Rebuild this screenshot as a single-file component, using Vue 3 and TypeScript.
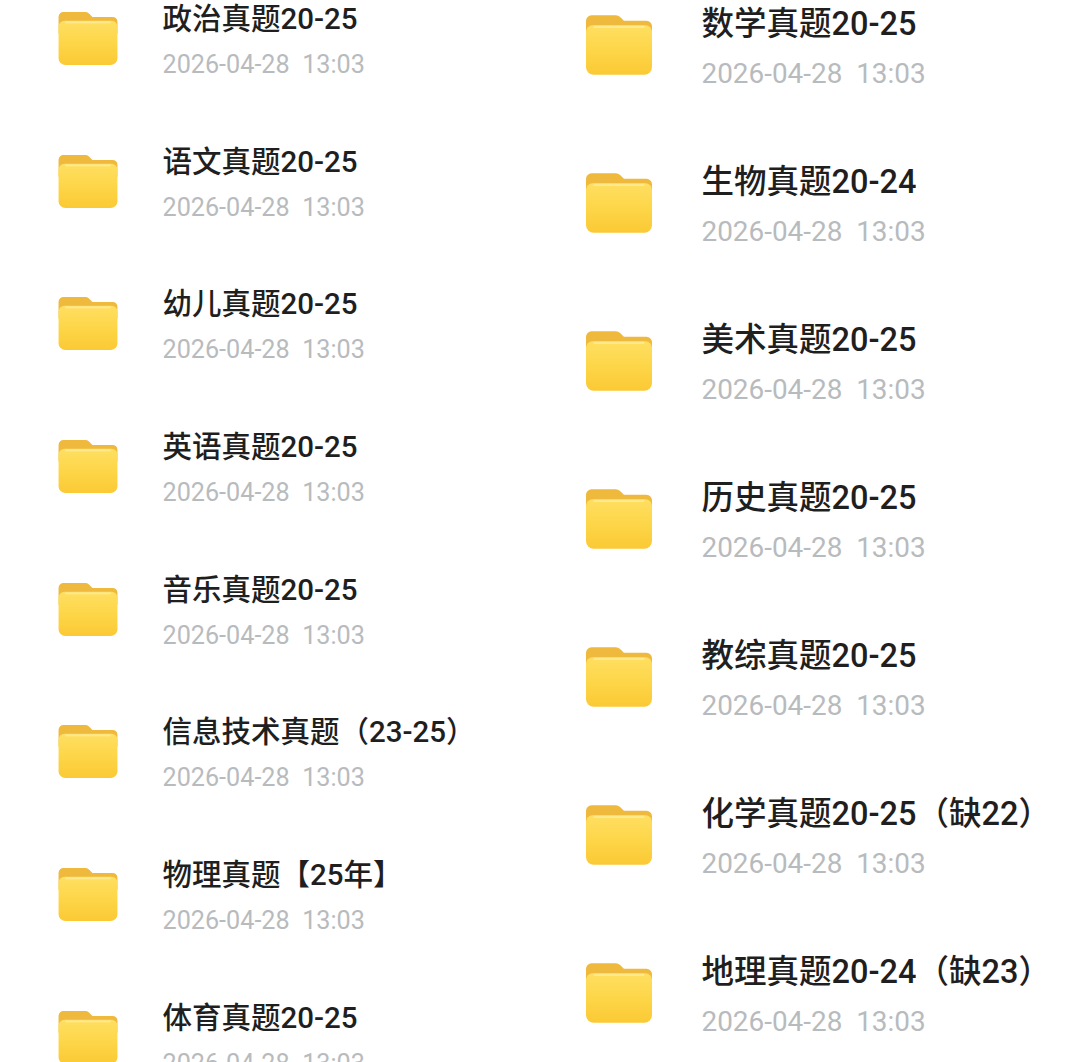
<script setup lang="ts">
interface Folder {
  name: string
}

const stamp = '2026-04-28  13:03'

const leftFolders: Folder[] = [
  { name: '政治真题20-25' },
  { name: '语文真题20-25' },
  { name: '幼儿真题20-25' },
  { name: '英语真题20-25' },
  { name: '音乐真题20-25' },
  { name: '信息技术真题（23-25）' },
  { name: '物理真题【25年】' },
  { name: '体育真题20-25' },
]

const rightFolders: Folder[] = [
  { name: '数学真题20-25' },
  { name: '生物真题20-24' },
  { name: '美术真题20-25' },
  { name: '历史真题20-25' },
  { name: '教综真题20-25' },
  { name: '化学真题20-25（缺22）' },
  { name: '地理真题20-24（缺23）' },
]

const columns = [
  { key: 'left', folders: leftFolders },
  { key: 'right', folders: rightFolders },
]
</script>

<template>
  <div class="page">
    <div v-for="col in columns" :key="col.key" class="list" :class="col.key">
      <div v-for="folder in col.folders" :key="folder.name" class="row">
        <svg class="icon" viewBox="0 0 60 54">
          <defs>
            <linearGradient :id="'front-' + col.key" x1="0" y1="0" x2="0" y2="1">
              <stop offset="0" stop-color="#ffdf62" />
              <stop offset="0.5" stop-color="#fdd648" />
              <stop offset="1" stop-color="#fbc935" />
            </linearGradient>
          </defs>
          <path d="M0 5a5 5 0 0 1 5-5h22a6 6 0 0 1 4 1.500l3.500 3.500H55a5 5 0 0 1 5 5v12H0z" fill="#eeb93c" />
          <path d="M0 15a6 6 0 0 1 6-6h48a6 6 0 0 1 6 6v32a7 7 0 0 1-7 7H7a7 7 0 0 1-7-7z" :fill="'url(#front-' + col.key + ')'" />
          <path d="M7 10.500h46" stroke="#ffe98e" stroke-width="2" fill="none" />
        </svg>
        <div class="text">
          <div class="title">{{ folder.name }}</div>
          <div class="date">{{ stamp }}</div>
        </div>
      </div>
    </div>
  </div>
</template>

<style scoped>
.page {
  display: flex;
  height: 1062px;
  overflow: hidden;
  background: #fff;
  font-family: Roboto, "Noto Sans CJK SC", sans-serif;
}

.list {
  display: flex;
  flex-direction: column;
}

.row {
  display: flex;
  flex-shrink: 0;
  align-items: flex-start;
}

.icon {
  display: block;
  flex-shrink: 0;
  filter: blur(0.6px);
}

.title {
  color: #1f1f1f;
  font-weight: 500;
  white-space: nowrap;
}

.date {
  color: #b8bbbe;
  white-space: pre;
}

.left {
  width: 586px;
  padding-left: 58px;
  box-sizing: border-box;
}

.left .row {
  height: 142.7px;
  gap: 44.5px;
}

.left .icon {
  width: 60px;
  height: 53px;
  margin-top: 12px;
}

.left .title {
  font-size: 29.5px;
  line-height: 38px;
}

.left .date {
  margin-top: 12px;
  font-size: 25.2px;
  line-height: 30px;
}

.right {
  padding-top: 3px;
}

.right .row {
  height: 158px;
  gap: 49.5px;
}

.right .icon {
  width: 66px;
  height: 60px;
  margin-top: 12px;
}

.right .title {
  font-size: 32.5px;
  line-height: 42px;
}

.right .date {
  margin-top: 13px;
  font-size: 27.9px;
  line-height: 32px;
}
</style>
